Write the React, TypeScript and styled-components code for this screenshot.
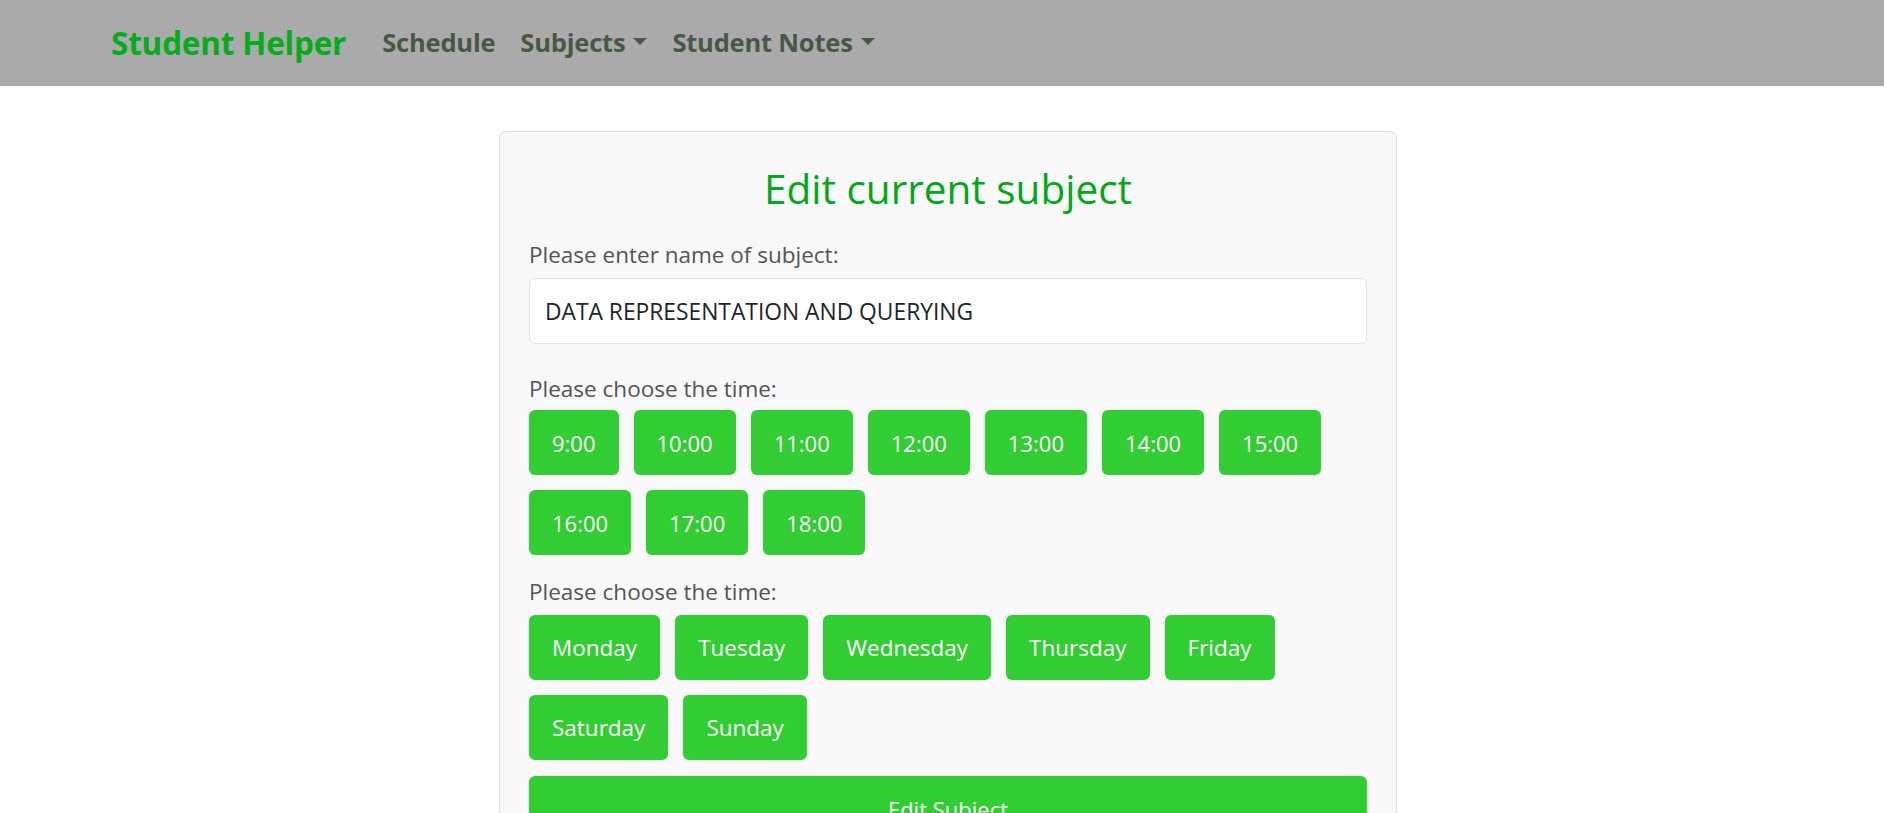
import { FC } from 'react';
import styled, { createGlobalStyle } from 'styled-components';

const TIMES = ['9:00', '10:00', '11:00', '12:00', '13:00', '14:00', '15:00', '16:00', '17:00', '18:00'];
const DAYS = ['Monday', 'Tuesday', 'Wednesday', 'Thursday', 'Friday', 'Saturday', 'Sunday'];

const App: FC = () => {
	return (
		<>
			<GlobalStyle />
			<NavBar>
				<Brand href="#">Student Helper</Brand>
				<NavLinks>
					<NavLink href="#">Schedule</NavLink>
					<NavLink href="#" dropdown>
						Subjects
					</NavLink>
					<NavLink href="#" dropdown>
						Student Notes
					</NavLink>
				</NavLinks>
			</NavBar>
			<Page>
				<Card>
					<Title>Edit current subject</Title>
					<Label htmlFor="subject-name">Please enter name of subject:</Label>
					<TextInput id="subject-name" defaultValue="DATA REPRESENTATION AND QUERYING" />
					<Label spaced>Please choose the time:</Label>
					<ChoiceGroup>
						{TIMES.map((time) => (
							<ChoiceButton key={time} type="button">
								{time}
							</ChoiceButton>
						))}
					</ChoiceGroup>
					<Label>Please choose the time:</Label>
					<ChoiceGroup>
						{DAYS.map((day) => (
							<ChoiceButton key={day} type="button" wide>
								{day}
							</ChoiceButton>
						))}
					</ChoiceGroup>
					<SubmitButton type="submit">Edit Subject</SubmitButton>
				</Card>
			</Page>
		</>
	);
};

const GlobalStyle = createGlobalStyle`
	* {
		box-sizing: border-box;
	}
	body {
		margin: 0;
		background: #ffffff;
		font-family: 'Open Sans', 'Noto Sans', sans-serif;
		color: #212529;
	}
`;

const NavBar = styled.nav`
	display: flex;
	align-items: center;
	height: 86px;
	padding: 0 0 2px 111px;
	background: #aaaaaa;
`;

const Brand = styled.a`
	font-size: 31.5px;
	font-weight: 700;
	color: #05ac1b;
	text-decoration: none;
	margin-right: 36px;
	letter-spacing: -0.2px;
`;

const NavLinks = styled.div`
	display: flex;
	align-items: center;
	gap: 25px;
`;

const NavLink = styled.a<{ dropdown?: boolean }>`
	font-size: 25.5px;
	font-weight: 700;
	color: #475945;
	text-decoration: none;
	letter-spacing: -0.2px;

	&::after {
		content: ${({ dropdown }) => (dropdown ? "''" : 'none')};
		display: inline-block;
		margin-left: 8px;
		vertical-align: 0.26em;
		border-top: 7px solid #475945;
		border-left: 7px solid transparent;
		border-right: 7px solid transparent;
	}
`;

const Page = styled.main`
	display: flex;
	justify-content: center;
	padding: 45px 0 0 12px;
`;

const Card = styled.form`
	display: flex;
	flex-direction: column;
	width: 898px;
	padding: 33px 29px 40px;
	background: #f8f8f8;
	border: 1px solid #dcdcdc;
	border-radius: 7px;
`;

const Title = styled.h1`
	margin: 0 0 25px;
	font-size: 40.5px;
	font-weight: 400;
	line-height: 48px;
	text-align: center;
	color: #03a81a;
`;

const Label = styled.label<{ spaced?: boolean }>`
	margin: ${({ spaced }) => (spaced ? '28px 0 5px' : '0 0 7px')};
	font-size: 22.5px;
	line-height: 33px;
	color: #545454;
`;

const TextInput = styled.input`
	height: 66px;
	padding: 0 15px;
	font-family: inherit;
	font-size: 22.8px;
	color: #212529;
	background: #ffffff;
	border: 1px solid #dee2e6;
	border-radius: 6px;
	outline: none;
`;

const ChoiceGroup = styled.div`
	display: flex;
	flex-wrap: wrap;
	gap: 15px;
	margin-bottom: 20px;
`;

const ChoiceButton = styled.button<{ wide?: boolean }>`
	height: 65px;
	padding: 0 23px;
	font-family: inherit;
	font-size: ${({ wide }) => (wide ? '22.5px' : '22px')};
	color: #ffffff;
	background: #32cd32;
	border: none;
	border-radius: 6px;
	cursor: pointer;
`;

const SubmitButton = styled(ChoiceButton)`
	width: 100%;
	margin-top: -4px;
`;

export default App;
